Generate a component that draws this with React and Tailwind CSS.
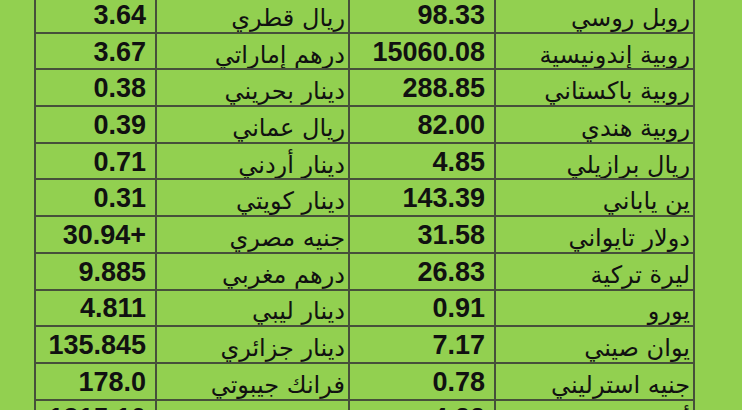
import React from "react";

const rows = [
  ["3.64", "ريال قطري", "98.33", "روبل روسي"],
  ["3.67", "درهم إماراتي", "15060.08", "روبية إندونيسية"],
  ["0.38", "دينار بحريني", "288.85", "روبية باكستاني"],
  ["0.39", "ريال عماني", "82.00", "روبية هندي"],
  ["0.71", "دينار أردني", "4.85", "ريال برازيلي"],
  ["0.31", "دينار كويتي", "143.39", "ين ياباني"],
  ["30.94+", "جنيه مصري", "31.58", "دولار تايواني"],
  ["9.885", "درهم مغربي", "26.83", "ليرة تركية"],
  ["4.811", "دينار ليبي", "0.91", "يورو"],
  ["135.845", "دينار جزائري", "7.17", "يوان صيني"],
  ["178.0", "فرانك جيبوتي", "0.78", "جنيه استرليني"],
  ["1315.10", "وون كوري جنوبي", "4.22", "أرياري مدغشقري"],
];

const num = "text-right pr-[9px] pt-[2px] font-bold text-[27px] text-[#111] font-['Liberation_Sans',Arial,sans-serif]";
const name = "text-right pr-[3px] pt-[7px] text-[24px] text-[#111] font-['DejaVu_Sans','Noto_Sans',sans-serif]";
const cell = "border-2 border-[#46503a] leading-none whitespace-nowrap overflow-hidden";

export default function App() {
  return (
    <div className="w-[742px] h-[410px] bg-[#92d050] overflow-hidden">
      <table className="table-fixed border-collapse ml-[34px] -mt-[5px] w-[659px]">
        <colgroup>
          <col className="w-[121px]" />
          <col className="w-[193px]" />
          <col className="w-[146px]" />
          <col className="w-[199px]" />
        </colgroup>
        <tbody>
          {rows.map((r, i) => (
            <tr key={i} className="h-[36.7px]">
              <td className={`${cell} ${num}`}>{r[0]}</td>
              <td className={`${cell} ${name}`} dir="rtl">
                {r[1]}
              </td>
              <td className={`${cell} ${num}`}>{r[2]}</td>
              <td className={`${cell} ${name}`} dir="rtl">
                {r[3]}
              </td>
            </tr>
          ))}
        </tbody>
      </table>
    </div>
  );
}
